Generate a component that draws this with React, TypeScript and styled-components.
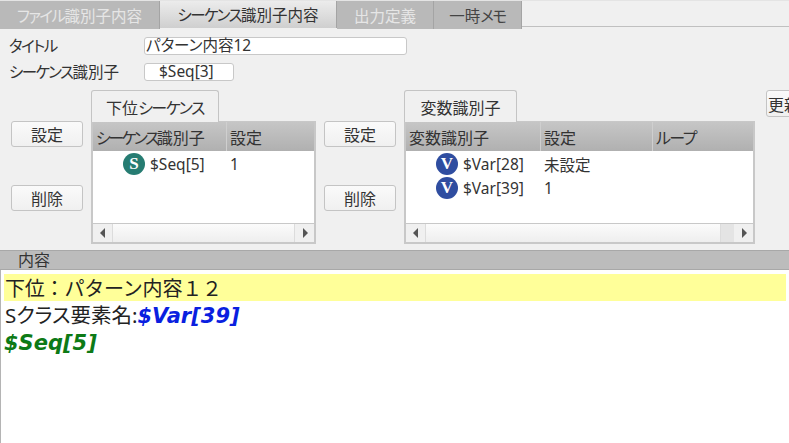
import React from 'react';
import styled, { createGlobalStyle } from 'styled-components';

const GlobalStyle = createGlobalStyle`
  html, body {
    margin: 0;
    padding: 0;
    background: #f0f0f0;
  }
  * {
    box-sizing: border-box;
  }
`;

const FONT = `"Noto Sans", "Noto Sans CJK JP", sans-serif`;

const App: React.FC = () => {
  return (
    <>
      <GlobalStyle />
      <Page>
        <TabBar>
          <MainTab $width={160} $muted><Kana>ファイル</Kana>識別子内容</MainTab>
          <MainTab $width={177} $active><Kana>シーケンス</Kana>識別子内容</MainTab>
          <MainTab $width={97} $muted>出力定義</MainTab>
          <MainTab $width={88}>一時<Kana>メモ</Kana></MainTab>
        </TabBar>

        <Form>
          <FormRow>
            <FormLabel><Kana>タイトル</Kana></FormLabel>
            <TitleInput>パターン内容12</TitleInput>
          </FormRow>
          <FormRow>
            <FormLabel><Kana>シーケンス</Kana>識別子</FormLabel>
            <IdBox>$Seq[3]</IdBox>
          </FormRow>
        </Form>

        <Panels>
          <Group>
            <ButtonColumn>
              <ActionButton>設定</ActionButton>
              <ActionButton>削除</ActionButton>
            </ButtonColumn>
            <TablePanel>
              <PanelTab $width={128}>下位<Kana>シーケンス</Kana></PanelTab>
              <Table $width={225}>
                <HeaderRow>
                  <HeaderCell $width={134}><HeaderKana>シーケンス</HeaderKana>識別子</HeaderCell>
                  <HeaderCell $width={87}>設定</HeaderCell>
                </HeaderRow>
                <Rows>
                  <Row>
                    <NameCell $width={134}>
                      <Badge $color="#267c72">S</Badge>
                      $Seq[5]
                    </NameCell>
                    <ValueCell>1</ValueCell>
                  </Row>
                </Rows>
                <ScrollBar $spare={0} />
              </Table>
            </TablePanel>
          </Group>

          <Group>
            <ButtonColumn>
              <ActionButton>設定</ActionButton>
              <ActionButton>削除</ActionButton>
            </ButtonColumn>
            <TablePanel>
              <PanelTab $width={113}>変数識別子</PanelTab>
              <Table $width={351}>
                <HeaderRow>
                  <HeaderCell $width={135}>変数識別子</HeaderCell>
                  <HeaderCell $width={112}>設定</HeaderCell>
                  <HeaderCell $width={100}><Kana>ループ</Kana></HeaderCell>
                </HeaderRow>
                <Rows>
                  <Row>
                    <NameCell $width={135}>
                      <Badge $color="#2f4da0">V</Badge>
                      $Var[28]
                    </NameCell>
                    <ValueCell>未設定</ValueCell>
                  </Row>
                  <Row>
                    <NameCell $width={135}>
                      <Badge $color="#2f4da0">V</Badge>
                      $Var[39]
                    </NameCell>
                    <ValueCell>1</ValueCell>
                  </Row>
                </Rows>
                <ScrollBar $spare={13} />
              </Table>
            </TablePanel>
          </Group>

          <UpdateButton>更新</UpdateButton>
        </Panels>

        <SectionBar>内容</SectionBar>
        <Content>
          <HighlightLine>下位：パターン内容１２</HighlightLine>
          <TextLine>
            Sクラス要素名:<VarToken>$Var[39]</VarToken>
          </TextLine>
          <TextLine>
            <SeqToken>$Seq[5]</SeqToken>
          </TextLine>
        </Content>
      </Page>
    </>
  );
};

const ScrollBar: React.FC<{ $spare: number }> = ({ $spare }) => (
  <ScrollTrack>
    <ScrollEnd>
      <svg width="6" height="10" viewBox="0 0 6 10">
        <path d="M5 0 L0 5 L5 10 Z" fill="#555" />
      </svg>
    </ScrollEnd>
    <ScrollThumb />
    <ScrollSpare $width={$spare} />
    <ScrollEnd>
      <svg width="6" height="10" viewBox="0 0 6 10">
        <path d="M1 0 L6 5 L1 10 Z" fill="#555" />
      </svg>
    </ScrollEnd>
  </ScrollTrack>
);

const Page = styled.div`
  width: 789px;
  height: 443px;
  overflow: hidden;
  display: flex;
  flex-direction: column;
  background: #f0f0f0;
  font-family: ${FONT};
  font-feature-settings: "palt";
  color: #222;
`;

/* the kana in the reference are narrower than the kanji next to them */
const Kana = styled.span`
  letter-spacing: -1.5px;
`;

const HeaderKana = styled.span`
  letter-spacing: -2.5px;
`;

const TabBar = styled.div`
  height: 27px;
  flex: none;
  display: flex;
  align-items: flex-start;
  border-bottom: 1px solid #c0c0c0;
  border-top: 1px solid #e4e4e4;
`;

const MainTab = styled.div<{ $width: number; $active?: boolean; $muted?: boolean }>`
  width: ${(p) => p.$width}px;
  height: ${(p) => (p.$active ? '27px' : '28px')};
  flex: none;
  display: flex;
  align-items: center;
  justify-content: center;
  font-size: 15.5px;
  white-space: nowrap;
  border-right: 1px solid #a4a4a4;
  color: ${(p) => (p.$active ? '#333' : p.$muted ? '#e6e6e6' : '#444')};
  background: ${(p) =>
    p.$active ? 'linear-gradient(#ececec, #cfcfcf)' : '#b9b9b9'};
`;

const Form = styled.div`
  height: 63px;
  flex: none;
  padding: 10px 0 0 9px;
  display: flex;
  flex-direction: column;
  gap: 9px;
`;

const FormRow = styled.div`
  display: flex;
  align-items: center;
  height: 17px;
`;

const FormLabel = styled.div`
  width: 135px;
  font-size: 15.5px;
  color: #333;
  white-space: nowrap;
`;

const TitleInput = styled.div`
  width: 263px;
  height: 18px;
  padding-left: 1px;
  line-height: 15px;
  font-size: 15.5px;
  color: #333;
  background: #fff;
  border: 1px solid #c8c8c8;
  border-radius: 3px;
  white-space: nowrap;
`;

const IdBox = styled(TitleInput)`
  width: 90px;
  padding-left: 14px;
`;

const Panels = styled.div`
  height: 160px;
  flex: none;
  padding-left: 11px;
  display: flex;
  align-items: flex-start;
`;

const Group = styled.div`
  display: flex;
  margin-right: 8px;
`;

const ButtonColumn = styled.div`
  width: 80px;
  padding-top: 31px;
  display: flex;
  flex-direction: column;
  gap: 38px;
`;

const ActionButton = styled.div`
  width: 72px;
  height: 26px;
  display: flex;
  align-items: center;
  justify-content: center;
  font-size: 16px;
  color: #333;
  background: linear-gradient(#fafafa, #f0f0f0);
  border: 1px solid #c4c4c4;
  border-radius: 3px;
`;

const UpdateButton = styled(ActionButton)`
  flex: none;
  margin-left: 3px;
  height: 27px;
  justify-content: flex-start;
  padding-left: 1px;
  white-space: nowrap;
`;

const TablePanel = styled.div`
  display: flex;
  flex-direction: column;
`;

const PanelTab = styled.div<{ $width: number }>`
  width: ${(p) => p.$width}px;
  height: 32px;
  margin-bottom: -1px;
  position: relative;
  z-index: 1;
  display: flex;
  align-items: center;
  justify-content: center;
  font-size: 16px;
  color: #333;
  background: #f0f0f0;
  border: 1px solid #c4c4c4;
  border-bottom: none;
  border-radius: 3px 3px 0 0;
`;

const Table = styled.div<{ $width: number }>`
  width: ${(p) => p.$width}px;
  height: 123px;
  display: flex;
  flex-direction: column;
  border: 2px solid #c8c8c8;
  border-width: 1px 2px 2px 2px;
  background: #fff;
`;

const HeaderRow = styled.div`
  height: 29px;
  flex: none;
  display: flex;
  background: linear-gradient(#c6c6c6, #b0b0b0);
`;

const HeaderCell = styled.div<{ $width: number }>`
  width: ${(p) => p.$width}px;
  padding-left: 3px;
  display: flex;
  align-items: center;
  font-size: 16px;
  color: #333;
  white-space: nowrap;
  border-right: 1px solid #cfcfcf;

  &:last-child {
    border-right: none;
  }
`;

const Rows = styled.div`
  flex: 1;
  padding-top: 1px;
`;

const Row = styled.div`
  height: 24px;
  display: flex;
  align-items: center;
  font-size: 15.5px;
  color: #333;
`;

const NameCell = styled.div<{ $width: number }>`
  width: ${(p) => p.$width}px;
  padding-left: 30px;
  display: flex;
  align-items: center;
  gap: 5px;
  white-space: nowrap;
`;

const ValueCell = styled.div`
  padding-left: 3px;
  white-space: nowrap;
`;

const Badge = styled.span<{ $color: string }>`
  width: 22px;
  height: 22px;
  flex: none;
  border-radius: 50%;
  display: flex;
  align-items: center;
  justify-content: center;
  font-family: "Liberation Serif", serif;
  font-weight: bold;
  font-size: 17px;
  color: #fff;
  background: ${(p) => p.$color};
`;

const ScrollTrack = styled.div`
  height: 19px;
  flex: none;
  display: flex;
  background: #f0f0f0;
  border-top: 1px solid #c8c8c8;
`;

const ScrollEnd = styled.div`
  width: 19px;
  flex: none;
  display: flex;
  align-items: center;
  justify-content: center;
`;

const ScrollThumb = styled.div`
  flex: 1;
  background: linear-gradient(#fbfbfb, #eeeeee);
  border: 1px solid #dcdcdc;
  border-width: 0 1px;
`;

const ScrollSpare = styled.div<{ $width: number }>`
  width: ${(p) => p.$width}px;
  flex: none;
  background: #e4e4e4;
`;

const SectionBar = styled.div`
  height: 20px;
  flex: none;
  padding: 0 0 2px 18px;
  display: flex;
  align-items: center;
  font-size: 16px;
  color: #333;
  background: #bcbcbc;
  border-top: 1px solid #a8a8a8;
  border-bottom: 1px solid #a8a8a8;
`;

const Content = styled.div`
  flex: 1;
  padding: 4px 3px 0 3px;
  background: #fff;
  border-left: 1px solid #b4b4b4;
  color: #222;
`;

const TextLine = styled.div`
  height: 27px;
  padding-left: 1px;
  font-size: 20.5px;
  line-height: 29px;
  white-space: nowrap;
`;

const HighlightLine = styled(TextLine)`
  background: #ffff99;
  font-size: 20px;
  font-feature-settings: normal;
  letter-spacing: -0.2px;
`;

const CodeToken = styled.span`
  font-family: "DejaVu Sans", sans-serif;
  font-weight: bold;
  font-style: italic;
  font-size: 21px;
`;

const VarToken = styled(CodeToken)`
  color: #0a1fe0;
`;

const SeqToken = styled(CodeToken)`
  margin-left: -1px;
  color: #0d7a16;
`;

export default App;
